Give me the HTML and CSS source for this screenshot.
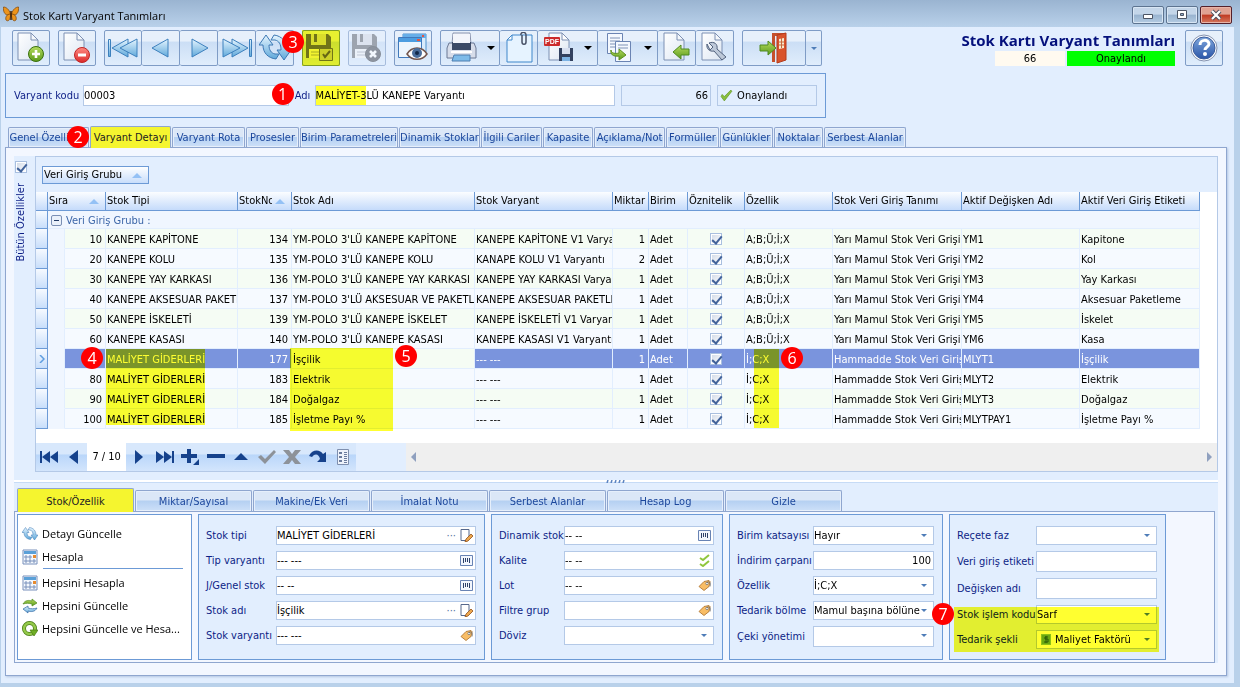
FILE: index.html
```html
<!DOCTYPE html>
<html lang="tr">
<head>
<meta charset="utf-8">
<title>Stok Kartı Varyant Tanımları</title>
<link rel="stylesheet" href="styles.css">
</head>
<body>
<svg class="defs" aria-hidden="true">
  <defs>
    <linearGradient id="gBlue" x1="0" y1="0" x2="0" y2="1"><stop offset="0" stop-color="#e6f5ff"/><stop offset="1" stop-color="#5fa8da"/></linearGradient>
    <linearGradient id="gPage" x1="0" y1="0" x2="1" y2="1"><stop offset="0" stop-color="#ffffff"/><stop offset="1" stop-color="#dde6f2"/></linearGradient>
    <linearGradient id="gGreen" x1="0" y1="0" x2="0" y2="1"><stop offset="0" stop-color="#b6dc5e"/><stop offset="1" stop-color="#5b9a1c"/></linearGradient>
    <linearGradient id="gRed" x1="0" y1="0" x2="0" y2="1"><stop offset="0" stop-color="#ff8a82"/><stop offset="1" stop-color="#dc2a2a"/></linearGradient>
    <linearGradient id="gHelp" x1="0" y1="0" x2="0" y2="1"><stop offset="0" stop-color="#7ea6dc"/><stop offset="1" stop-color="#2a55a8"/></linearGradient>
    <symbol id="page" viewBox="0 0 32 32"><path d="M3 1h13l7 7v20H3z" fill="url(#gPage)" stroke="#7d90b3"/><path d="M16 1v7h7z" fill="#f4f7fb" stroke="#7d90b3"/></symbol>
    <symbol id="cycle" viewBox="0 0 32 32"><g fill="url(#gBlue)" stroke="#3d78b4" stroke-linejoin="round"><path d="M7 3 0 13h4c0 8 5 13 13 14l3-5h-4c-4-1-6-4-6-9h4z"/><path d="m25 28 7-10h-4C28 10 23 4 15 3l-3 5h4c4 1 6 4 6 10h-4z"/></g></symbol>
    <symbol id="floppy" viewBox="0 0 32 32"><path d="M1 2h22l3 3v21H1z" fill="#70747c"/><path d="M6 2h15v11H6z" fill="#d9dde6"/><path d="M9 2h3v8H9z" fill="#70747c"/><path d="M4 17h18v9H4z" fill="#f1f3f7"/><path d="M6 20h13M6 23h13" stroke="#a9aeb8"/></symbol>
    <symbol id="caret" viewBox="0 0 8 4"><path d="M0 0h8L4 4z" fill="currentColor"/></symbol>
    <symbol id="sort" viewBox="0 0 10 5"><path d="M0 5 5 0l5 5z" fill="#94c1f5"/></symbol>
    <symbol id="calc" viewBox="0 0 16 16"><path d="M1 1h14v14H1z" fill="#f4f8fd" stroke="#7890bb"/><path d="M2 2h12v3H2z" fill="#5aa0d8"/><path d="M3 7h2v2H3zM7 7h2v2H7zM3 11h2v2H3zM7 11h2v2H7zM11 11h2v2h-2z" fill="none" stroke="#7890bb"/><path d="M11 6h3v3h-3z" fill="#e78a2e"/></symbol>
    <symbol id="edit" viewBox="0 0 13 13"><path d="M1 .5h8v8l-3 3H1z" fill="#fff" stroke="#56688c"/><path d="m6 10 5-5 2 2-5 5-3 1z" fill="#eda74d" stroke="#91501c" stroke-width=".8"/></symbol>
    <symbol id="bars" viewBox="0 0 13 11"><path d="M.5.5h12v10H.5z" fill="#f2f6fd" stroke="#6883b4"/><path d="M3.500 3v5M5.500 3v4M7.500 3v4M9.500 3v5" stroke="#2c4068"/></symbol>
    <symbol id="tag" viewBox="0 0 13 12"><path d="m1 7 5-5 5-1 1 1-1 5-5 4z" fill="#f8bd66" stroke="#a86d2a" stroke-width=".8"/><circle cx="9" cy="4" r="1.200" fill="#fff" stroke="#666" stroke-width=".7"/><path d="M9 3c3-2 4 1 3 4" fill="none" stroke="#666" stroke-width=".8"/></symbol>
  </defs>
</svg>
<div class="window">
  <header class="titlebar">
    <svg class="app-icon" viewBox="0 0 16 16"><g fill="#ec941c" stroke="#7a3f05" stroke-width=".7"><path d="M7.500 8C6 3 3 1 .5 1 0 5 1.500 9 5 9z"/><path d="M8.500 8c1.500-5 4.500-7 7-7 .5 4-1 8-4.500 8z"/><path d="M7.500 8C4 8 2 11 3 14c2 2 4 0 4.500-4z"/><path d="M8.500 8c3.500 0 5.500 3 4.500 6-2 2-4 0-4.500-4z"/></g><path d="M8 5v9" stroke="#412003" stroke-width="1.500"/></svg>
    <h1 class="titlebar-text">Stok Kartı Varyant Tanımları</h1>
    <div class="caption-buttons">
      <button class="cap" aria-label="Küçült"><svg viewBox="0 0 30 16"><path d="M10.500 7.500h9v4h-9z" fill="#fff" stroke="#4c5564"/></svg></button>
      <button class="cap" aria-label="Büyüt"><svg viewBox="0 0 30 16"><path d="M10.500 3.500h9v8h-9z" fill="#fff" stroke="#4c5564"/><path d="M13.500 6.500h3v2h-3z" fill="#8fabc8" stroke="#4c5564"/></svg></button>
      <button class="cap cap-close" aria-label="Kapat"><svg viewBox="0 0 30 16"><path d="m11 4 8 8m0-8-8 8" stroke="#4b4f5c" stroke-width="4"/><path d="m11 4 8 8m0-8-8 8" stroke="#fff" stroke-width="2.200"/></svg></button>
    </div>
  </header>

  <main class="client">
    <div class="toolbar">
      <button class="tool" aria-label="Yeni"><svg viewBox="0 0 32 32"><use href="#page" width="32" height="32"/><circle cx="21" cy="22" r="7.500" fill="url(#gGreen)" stroke="#39700e"/><path d="M21 18v8M17 22h8" stroke="#fff" stroke-width="2.600"/></svg></button>
      <button class="tool" aria-label="Sil"><svg viewBox="0 0 32 32"><use href="#page" width="32" height="32"/><circle cx="21" cy="23" r="7.500" fill="url(#gRed)" stroke="#c02626"/><path d="M17 23h8" stroke="#fff" stroke-width="3"/></svg></button>
      <div class="tool-group">
        <button class="tool" aria-label="İlk"><svg viewBox="0 0 32 32"><g fill="url(#gBlue)" stroke="#3d80bd"><path d="M1.500 7.500h2v17h-2zM21 7v18L5 16z"/><path d="M30 7v18L13 16z"/></g></svg></button>
        <button class="tool" aria-label="Önceki"><svg viewBox="0 0 32 32"><path d="M23 7v18L7 16z" fill="url(#gBlue)" stroke="#3d80bd"/></svg></button>
        <button class="tool" aria-label="Sonraki"><svg viewBox="0 0 32 32"><path d="M9 7v18l16-9z" fill="url(#gBlue)" stroke="#3d80bd"/></svg></button>
        <button class="tool" aria-label="Son"><svg viewBox="0 0 32 32"><g fill="url(#gBlue)" stroke="#3d80bd"><path d="M28.500 7.500h2v17h-2zM11 7v18l16-9z"/><path d="M2 7v18l17-9z"/></g></svg></button>
        <button class="tool" aria-label="Yenile"><svg viewBox="0 0 32 32"><use href="#cycle" width="32" height="32"/></svg><span class="callout callout-3">3</span></button>
      </div>
      <button class="tool marked" aria-label="Kaydet"><svg viewBox="0 0 32 32"><use href="#floppy" width="32" height="32"/><path d="M14.500 16.500h13v12h-13z" fill="#ccd0d6" stroke="#70747c"/><path d="m18 22 2 3 5-6" fill="none" stroke="#666" stroke-width="2"/></svg></button>
      <button class="tool faded" aria-label="İptal"><svg viewBox="0 0 32 32"><use href="#floppy" width="32" height="32"/><circle cx="22" cy="22" r="7.500" fill="#565a62" stroke="#4c5058"/><path d="m19 19 6 6m0-6-6 6" stroke="#fff" stroke-width="2.600"/></svg></button>
      <button class="tool" aria-label="Önizleme"><svg viewBox="0 0 32 32"><path d="M6 2h23v18H6z" fill="#d8ebfc" stroke="#4d90cc"/><path d="M6 2h23v4H6z" fill="#67aee8"/><path d="M1.500 5.500h23v20h-23z" fill="#edf5fd" stroke="#4079bc"/><path d="M2 6h22v4H2z" fill="#4d9de0"/><path d="M20 7h3v2h-3zM25 3h2v2h-2z" fill="#e55442"/><path d="M10 22c5-8 15-8 20 0-5 7-15 7-20 0z" fill="#fff" stroke="#72554d" stroke-width="1.500"/><circle cx="20" cy="21" r="5" fill="#496d9c"/><circle cx="20" cy="21" r="2" fill="#11284a"/></svg></button>
      <div class="tool-group">
        <button class="tool tool-wide" aria-label="Yazdır"><svg viewBox="0 0 32 32"><path d="M7 1h17l1 11H6z" fill="#eef2fa" stroke="#8993ad"/><path d="M3 11h25l2 5v10H1V16z" fill="#d7ddea" stroke="#6b7894"/><path d="M6 10h19v8H6z" fill="#3b4a66"/><path d="M7 2h17v9H7z" fill="#f3f5fb"/><path d="M5 20h21" stroke="#fff" stroke-width="2"/><path d="M8 23h16v6H6z" fill="#7ebbe9" stroke="#4f7fb0"/></svg><svg class="drop" viewBox="0 0 8 4"><use href="#caret"/></svg></button>
        <button class="tool" aria-label="Ekler"><svg viewBox="0 0 32 32"><path d="M9 3h20v27H4V8z" fill="#e6f3ff" stroke="#3f87cb"/><path d="M9 3v5H4z" fill="#fff" stroke="#3f87cb"/><path d="M19 3v7c0 3 4 3 4 0V3c0-4-6-3-5 0" fill="none" stroke="#475066" stroke-width="1.500"/></svg></button>
        <button class="tool tool-wide" aria-label="PDF kaydet"><svg viewBox="0 0 32 32"><path d="M6 1h13l7 7v20H6z" fill="url(#gPage)" stroke="#7d90b3"/><path d="M19 1v7h7z" fill="#fff" stroke="#7d90b3"/><rect x="1" y="5" width="16" height="9" rx="1" fill="#cc2b2b"/><text x="2" y="12" class="pdf-text">PDF</text><path d="M16 16h14v13H16z" fill="#33415f"/><path d="M19 16h8v6h-8z" fill="#d7dff0"/><path d="M19 25h8v4h-8z" fill="#7db3e4"/></svg><svg class="drop" viewBox="0 0 8 4"><use href="#caret"/></svg></button>
        <button class="tool tool-wide" aria-label="Kopyala"><svg viewBox="0 0 32 32"><path d="M4.500 1.500h15v20h-15z" fill="#f4f8fe" stroke="#6b84b3"/><path d="M7 6h10M7 9h10M7 12h7M7 15h7" stroke="#7f92b6"/><path d="M12.500 9.500h15v20h-15z" fill="#f4f8fe" stroke="#6b84b3"/><path d="M15 13h10M15 16h10" stroke="#7f92b6"/><path d="M8 18c0 3 4 4 8 3v-4l7 6-7 5v-4c-6 1-9-2-8-6z" fill="url(#gGreen)" stroke="#5d901f"/></svg><svg class="drop" viewBox="0 0 8 4"><use href="#caret"/></svg></button>
        <button class="tool" aria-label="İçe aktar"><svg viewBox="0 0 32 32"><use href="#page" width="32" height="32"/><path d="m12 20 8-7v4h8v6h-8v4z" fill="url(#gGreen)" stroke="#4f8a20"/></svg></button>
        <button class="tool" aria-label="Ayarlar"><svg viewBox="0 0 32 32"><use href="#page" width="32" height="32"/><path d="M8 12c-1 5 3 8 7 7l8 9 4-3-9-8c1-5-3-8-8-6l4 4-3 3z" fill="#bdc8d8" stroke="#51617c"/></svg></button>
      </div>
      <div class="tool-group">
        <button class="tool tool-exit" aria-label="Çıkış"><svg viewBox="0 0 32 32"><path d="M14 1h14v3H17v26h-3z" fill="#c5502c"/><path d="m19 3 9-2v27l-9 3z" fill="#d9532c" stroke="#b43c1d"/><path d="m21 7 5-1v10l-5 1z" fill="#f7ead0"/><path d="M23.500 6v10M21 10h5M21 13h5" stroke="#c9683d"/><path d="M2 13h8V9l8 7-8 7v-4H2z" fill="url(#gGreen)" stroke="#4f8a20"/></svg></button>
        <button class="tool tool-thin" aria-label="Çıkış seçenekleri"><svg class="drop drop-blue" viewBox="0 0 8 4"><use href="#caret"/></svg></button>
      </div>
      <div class="status">
        <h2 class="status-title">Stok Kartı Varyant Tanımları</h2>
        <div class="status-row"><span class="status-no">66</span><span class="status-ok">Onaylandı</span></div>
      </div>
      <button class="tool" aria-label="Yardım"><svg viewBox="0 0 32 32"><circle cx="16" cy="16" r="13" fill="#fff" stroke="#8593b0"/><circle cx="16" cy="16" r="11" fill="url(#gHelp)" stroke="#3b5c9c"/><path d="M12 13c0-6 9-6 9-1 0 3-4 3-4 6" fill="none" stroke="#fff" stroke-width="3"/><circle cx="17" cy="22" r="2" fill="#fff"/></svg></button>
    </div>

    <form class="record">
      <label class="lbl" for="kod">Varyant kodu</label>
      <span class="field rec-code"><input id="kod" value="00003"></span>
      <label class="lbl rec-name-lbl" for="adi">Adı<span class="callout callout-1">1</span></label>
      <span class="field rec-name"><input id="adi" value="MALİYET-3LÜ KANEPE Varyantı"><i class="marker marker-name"></i></span>
      <span class="field readonly rec-no"><input class="num" value="66" readonly aria-label="No"></span>
      <span class="field readonly rec-state"><svg class="ic" viewBox="0 0 12 12"><path d="m1 7 3 4 7-9-1-1-6 6-2-2z" fill="#8abf3f" stroke="#5f9420" stroke-width=".6"/></svg><input value="Onaylandı" readonly aria-label="Durum"></span>
    </form>

    <nav class="tabs main-tabs">
      <button class="tab">Genel Özellikler<span class="callout callout-2">2</span></button><button class="tab active">Varyant Detayı</button><button class="tab">Varyant Rota</button><button class="tab">Prosesler</button><button class="tab">Birim Parametreleri</button><button class="tab">Dinamik Stoklar</button><button class="tab">İlgili Cariler</button><button class="tab">Kapasite</button><button class="tab">Açıklama/Not</button><button class="tab">Formüller</button><button class="tab">Günlükler</button><button class="tab">Noktalar</button><button class="tab">Serbest Alanlar</button>
    </nav>

    <section class="sheet">
      <div class="upper">
        <div class="side"><input type="checkbox" class="check" id="all" checked><label for="all" class="side-label">Bütün Özellikler</label></div>
        <div class="grid-box">
          <div class="group-area"><button class="group-chip">Veri Giriş Grubu<svg class="sort" viewBox="0 0 10 5"><use href="#sort"/></svg></button></div>
          <div class="grid-scroll">
            <table class="grid">
              <colgroup><col class="c-ind"><col class="c-gap"><col class="c-sira"><col class="c-tip"><col class="c-no"><col class="c-adi"><col class="c-var"><col class="c-mik"><col class="c-bir"><col class="c-ozn"><col class="c-oz"><col class="c-tan"><col class="c-deg"><col class="c-eti"></colgroup>
              <thead><tr><th></th><th colspan="2"><span class="th-in">Sıra<svg class="sort" viewBox="0 0 10 5"><use href="#sort"/></svg></span></th><th>Stok Tipi</th><th><span class="th-in"><span class="cut">StokNo</span><svg class="sort" viewBox="0 0 10 5"><use href="#sort"/></svg></span></th><th>Stok Adı</th><th>Stok Varyant</th><th>Miktar</th><th>Birim</th><th>Öznitelik</th><th>Özellik</th><th>Stok Veri Giriş Tanımı</th><th>Aktif Değişken Adı</th><th>Aktif Veri Giriş Etiketi</th></tr></thead>
              <tbody>
                <tr class="group-row"><td class="ind"></td><td colspan="13"><button class="collapse" aria-label="Daralt"></button>Veri Giriş Grubu :</td></tr>
                <tr class="alt"><td class="ind"></td><td class="gap"></td><td class="num">10</td><td>KANEPE KAPİTONE</td><td class="num">134</td><td>YM-POLO 3'LÜ KANEPE KAPİTONE</td><td>KANEPE KAPİTONE V1 Varyantı</td><td class="num">1</td><td>Adet</td><td class="mid"><input type="checkbox" class="check" checked aria-label="Öznitelik 10"></td><td>A;B;Ü;İ;X</td><td>Yarı Mamul Stok Veri Grişi</td><td>YM1</td><td>Kapitone</td></tr>
                <tr><td class="ind"></td><td class="gap"></td><td class="num">20</td><td>KANEPE KOLU</td><td class="num">135</td><td>YM-POLO 3'LÜ KANEPE KOLU</td><td>KANAPE KOLU V1 Varyantı</td><td class="num">2</td><td>Adet</td><td class="mid"><input type="checkbox" class="check" checked aria-label="Öznitelik 20"></td><td>A;B;Ü;İ;X</td><td>Yarı Mamul Stok Veri Grişi</td><td>YM2</td><td>Kol</td></tr>
                <tr class="alt"><td class="ind"></td><td class="gap"></td><td class="num">30</td><td>KANEPE YAY KARKASI</td><td class="num">136</td><td>YM-POLO 3'LÜ KANEPE YAY KARKASI</td><td>KANEPE YAY KARKASI Varyantı</td><td class="num">1</td><td>Adet</td><td class="mid"><input type="checkbox" class="check" checked aria-label="Öznitelik 30"></td><td>A;B;Ü;İ;X</td><td>Yarı Mamul Stok Veri Grişi</td><td>YM3</td><td>Yay Karkası</td></tr>
                <tr><td class="ind"></td><td class="gap"></td><td class="num">40</td><td>KANEPE AKSESUAR PAKETLEME</td><td class="num">137</td><td>YM-POLO 3'LÜ AKSESUAR VE PAKETLEME</td><td>KANEPE AKSESUAR PAKETLEME</td><td class="num">1</td><td>Adet</td><td class="mid"><input type="checkbox" class="check" checked aria-label="Öznitelik 40"></td><td>A;B;Ü;İ;X</td><td>Yarı Mamul Stok Veri Grişi</td><td>YM4</td><td>Aksesuar Paketleme</td></tr>
                <tr class="alt"><td class="ind"></td><td class="gap"></td><td class="num">50</td><td>KANEPE İSKELETİ</td><td class="num">139</td><td>YM-POLO 3'LÜ KANEPE İSKELET</td><td>KANEPE İSKELETİ V1 Varyantı</td><td class="num">1</td><td>Adet</td><td class="mid"><input type="checkbox" class="check" checked aria-label="Öznitelik 50"></td><td>A;B;Ü;İ;X</td><td>Yarı Mamul Stok Veri Grişi</td><td>YM5</td><td>İskelet</td></tr>
                <tr><td class="ind"></td><td class="gap"></td><td class="num">60</td><td>KANEPE KASASI</td><td class="num">140</td><td>YM-POLO 3'LÜ KANEPE KASASI</td><td>KANEPE KASASI V1 Varyantı</td><td class="num">1</td><td>Adet</td><td class="mid"><input type="checkbox" class="check" checked aria-label="Öznitelik 60"></td><td>A;B;Ü;İ;X</td><td>Yarı Mamul Stok Veri Grişi</td><td>YM6</td><td>Kasa</td></tr>
                <tr class="selected"><td class="ind"><svg class="row-mark" viewBox="0 0 6 8"><path d="m1 0 4 4-4 4" fill="none" stroke="#5e9de0" stroke-width="1.500"/></svg></td><td class="gap"></td><td class="num"></td><td>MALİYET GİDERLERİ</td><td class="num">177</td><td class="focus">İşçilik</td><td>--- ---</td><td class="num">1</td><td>Adet</td><td class="mid"><input type="checkbox" class="check" checked aria-label="Öznitelik 70"></td><td>İ;C;X</td><td>Hammadde Stok Veri Girişi</td><td>MLYT1</td><td>İşçilik</td></tr>
                <tr><td class="ind"></td><td class="gap"></td><td class="num">80</td><td>MALİYET GİDERLERİ</td><td class="num">183</td><td>Elektrik</td><td>--- ---</td><td class="num">1</td><td>Adet</td><td class="mid"><input type="checkbox" class="check" checked aria-label="Öznitelik 80"></td><td>İ;C;X</td><td>Hammadde Stok Veri Girişi</td><td>MLYT2</td><td>Elektrik</td></tr>
                <tr class="alt"><td class="ind"></td><td class="gap"></td><td class="num">90</td><td>MALİYET GİDERLERİ</td><td class="num">184</td><td>Doğalgaz</td><td>--- ---</td><td class="num">1</td><td>Adet</td><td class="mid"><input type="checkbox" class="check" checked aria-label="Öznitelik 90"></td><td>İ;C;X</td><td>Hammadde Stok Veri Girişi</td><td>MLYT3</td><td>Doğalgaz</td></tr>
                <tr><td class="ind"></td><td class="gap"></td><td class="num">100</td><td>MALİYET GİDERLERİ</td><td class="num">185</td><td>İşletme Payı %</td><td>--- ---</td><td class="num">1</td><td>Adet</td><td class="mid"><input type="checkbox" class="check" checked aria-label="Öznitelik 100"></td><td>İ;C;X</td><td>Hammadde Stok Veri Girişi</td><td>MLYTPAY1</td><td>İşletme Payı %</td></tr>
              </tbody>
            </table>
            <i class="marker marker-tip"></i><i class="marker marker-adi"></i><i class="marker marker-oz"></i>
            <span class="callout callout-4">4</span><span class="callout callout-5">5</span><span class="callout callout-6">6</span>
          </div>
          <div class="grid-foot">
            <div class="navigator">
              <button aria-label="İlk"><svg viewBox="0 0 18 16"><path d="M0 2h2v12H0zM10 2v12L2 8zM18 2v12l-8-6z"/></svg></button>
              <button aria-label="Önceki"><svg viewBox="0 0 18 16"><path d="M13 1v14L4 8z"/></svg></button>
              <span class="nav-pos">7 / 10</span>
              <button aria-label="Sonraki"><svg viewBox="0 0 18 16"><path d="M5 1v14l8-7z"/></svg></button>
              <button aria-label="Son"><svg viewBox="0 0 18 16"><path d="M16 2h2v12h-2zM0 2v12l8-6zM8 2v12l8-6z"/></svg></button>
              <button aria-label="Ekle"><svg viewBox="0 0 18 16"><path d="M6 0h4v5h6v4h-6v5H6V9H0V5h6zM12 16h6v-6z"/></svg></button>
              <button aria-label="Çıkar"><svg viewBox="0 0 18 16"><path d="M0 5h18v4H0z"/></svg></button>
              <button aria-label="Düzenle"><svg viewBox="0 0 18 16"><path d="m2 11 7-7 7 7z"/></svg></button>
              <button class="off" aria-label="Onayla"><svg viewBox="0 0 18 16"><path d="m0 8 3-2 4 4 9-9 2 2L7 15z"/></svg></button>
              <button class="off" aria-label="Vazgeç"><svg viewBox="0 0 18 16"><path d="M0 1h6l3 4 3-4h6l-6 7 6 7h-6l-3-4-3 4H0l6-7z"/></svg></button>
              <button aria-label="Tazele"><svg viewBox="0 0 18 16"><path d="M0 7c3-7 11-7 14-2l3-2v10H8l3-3C10 5 6 4 3 8z"/></svg></button>
              <button aria-label="Form"><svg viewBox="0 0 18 16"><path d="M3.500.5h11v15h-11z" fill="#eef3fb" stroke="#7e8fae"/><path d="M5 3h3v2H5zM5 7h3v2H5zM5 11h3v2H5zM10 3h3v1h-3zM10 5h3v1h-3zM10 7h3v1h-3zM10 9h3v1h-3zM10 11h3v1h-3zM10 13h3v1h-3z" fill="#6b7c9e"/></svg></button>
            </div>
            <div class="hscroll"><svg viewBox="0 0 5 10"><path d="M5 0v10L0 5z"/></svg><svg viewBox="0 0 5 10"><path d="M0 0v10l5-5z"/></svg></div>
          </div>
        </div>
      </div>

      <div class="splitter"><svg viewBox="0 0 20 3"><path d="M1 3 2 0M5 3l1-3M9 3l1-3M13 3l1-3M17 3l1-3" stroke="#5b83c0" stroke-width="1.500"/></svg></div>

      <div class="lower">
        <nav class="tabs sub-tabs">
          <button class="tab active">Stok/Özellik</button><button class="tab">Miktar/Sayısal</button><button class="tab">Makine/Ek Veri</button><button class="tab">İmalat Notu</button><button class="tab">Serbest Alanlar</button><button class="tab">Hesap Log</button><button class="tab">Gizle</button>
        </nav>
        <div class="cards">
          <div class="card actions">
            <button><svg viewBox="0 0 32 32"><use href="#cycle" width="32" height="32"/></svg>Detayı Güncelle</button>
            <button class="ruled"><svg viewBox="0 0 16 16"><use href="#calc"/></svg>Hesapla</button>
            <button><svg viewBox="0 0 16 16"><use href="#calc"/></svg>Hepsini Hesapla</button>
            <button><svg viewBox="0 0 16 16"><path d="M1 6c2-4 6-4 9-3V1l5 4-5 3V6C7 5 4 5 1 6z" fill="url(#gGreen)" stroke="#4f8a20" stroke-width=".7"/><path d="M15 10c-2 4-6 4-9 3v2l-5-4 5-3v2c3 1 6 1 9 0z" fill="url(#gBlue)" stroke="#3268a5" stroke-width=".7"/></svg>Hepsini Güncelle</button>
            <button><svg viewBox="0 0 16 16"><circle cx="7.500" cy="7.500" r="5.500" fill="none" stroke="#477a13" stroke-width="4"/><circle cx="7.500" cy="7.500" r="5.500" fill="none" stroke="#94c94a" stroke-width="2.500"/><path d="M8 9h8l-4 6z" fill="#6fae24" stroke="#477a13" stroke-width=".7"/></svg>Hepsini Güncelle ve Hesa...</button>
          </div>
          <form class="card form form-a">
            <label for="a1">Stok tipi</label><span class="field"><input id="a1" value="MALİYET GİDERLERİ"><b class="dots">···</b><svg class="ic" viewBox="0 0 13 13"><use href="#edit"/></svg></span>
            <label for="a2">Tip varyantı</label><span class="field"><input id="a2" value="--- ---"><svg class="ic" viewBox="0 0 13 11"><use href="#bars"/></svg></span>
            <label for="a3">J/Genel stok</label><span class="field"><input id="a3" value="-- --"><svg class="ic" viewBox="0 0 13 11"><use href="#bars"/></svg></span>
            <label for="a4">Stok adı</label><span class="field"><input id="a4" value="İşçilik"><b class="dots">···</b><svg class="ic" viewBox="0 0 13 13"><use href="#edit"/></svg></span>
            <label for="a5">Stok varyantı</label><span class="field"><input id="a5" value="--- ---"><svg class="ic" viewBox="0 0 13 12"><use href="#tag"/></svg></span>
          </form>
          <form class="card form form-b">
            <label for="b1">Dinamik stok</label><span class="field"><input id="b1" value="-- --"><svg class="ic" viewBox="0 0 13 11"><use href="#bars"/></svg></span>
            <label for="b2">Kalite</label><span class="field"><input id="b2" value="-- --"><svg class="ic" viewBox="0 0 13 13"><path d="m2 4 3 2 6-5M2 10l3 2 6-5" fill="none" stroke="#8fc63d" stroke-width="2"/></svg></span>
            <label for="b3">Lot</label><span class="field"><input id="b3" value="-- --"><svg class="ic" viewBox="0 0 13 12"><use href="#tag"/></svg></span>
            <label for="b4">Filtre grup</label><span class="field"><input id="b4"><svg class="ic" viewBox="0 0 13 12"><use href="#tag"/></svg></span>
            <label for="b5">Döviz</label><span class="field"><select id="b5"><option></option></select><svg class="arrow" viewBox="0 0 8 4"><use href="#caret"/></svg></span>
          </form>
          <form class="card form form-c">
            <label for="c1">Birim katsayısı</label><span class="field"><select id="c1"><option>Hayır</option></select><svg class="arrow" viewBox="0 0 8 4"><use href="#caret"/></svg></span>
            <label for="c2">İndirim çarpanı</label><span class="field"><input id="c2" class="num" value="100"></span>
            <label for="c3">Özellik</label><span class="field"><select id="c3"><option>İ;C;X</option></select><svg class="arrow" viewBox="0 0 8 4"><use href="#caret"/></svg></span>
            <label for="c4">Tedarik bölme</label><span class="field"><select id="c4"><option>Mamul başına bölüne</option></select><svg class="arrow" viewBox="0 0 8 4"><use href="#caret"/></svg></span>
            <label for="c5">Çeki yönetimi</label><span class="field tall"><select id="c5"><option></option></select><svg class="arrow" viewBox="0 0 8 4"><use href="#caret"/></svg></span>
          </form>
          <form class="card form form-d">
            <label for="d1">Reçete faz</label><span class="field"><select id="d1"><option></option></select><svg class="arrow" viewBox="0 0 8 4"><use href="#caret"/></svg></span>
            <label for="d2">Veri giriş etiketi</label><span class="field tall"><input id="d2"></span>
            <label for="d3">Değişken adı</label><span class="field tall"><input id="d3"></span>
            <label for="d4">Stok işlem kodu</label><span class="field"><select id="d4"><option>Sarf</option></select><svg class="arrow" viewBox="0 0 8 4"><use href="#caret"/></svg></span>
            <label for="d5">Tedarik şekli</label><span class="field"><svg class="ic money" viewBox="0 0 10 11"><path d="M0 0h10v11H0z" fill="#8cc07a"/><path d="M1 1h8v9H1z" fill="#6aa858"/><path d="M7 3H4v2h3v3H3M5 2v7" fill="none" stroke="#2b5a24"/></svg><select id="d5"><option>Maliyet Faktörü</option></select><svg class="arrow" viewBox="0 0 8 4"><use href="#caret"/></svg></span>
            <i class="marker marker-form"></i><span class="callout callout-7">7</span>
          </form>
        </div>
      </div>
    </section>
  </main>
</div>
</body>
</html>
```
FILE: styles.css
```css
:root {
  --pane: #e2eefe;
  --sheet: #f3f7ff;
  --line: #6c9ad6;
  --soft: #b4c9e7;
  --tabline: #8fa6cf;
  --navy: #0d1e86;
  --ui: "DejaVu Sans Condensed", "DejaVu Sans", sans-serif;
  --title: "Open Sans", "Noto Sans", sans-serif;
}
* { box-sizing: border-box; }
body { margin: 0; font: 11px/14px var(--ui); color: #000; background: #b9d1ea; }
button, input, select { font: inherit; color: inherit; margin: 0; padding: 0; border: 0; background: none; border-radius: 0; }
h1, h2 { margin: 0; }
.defs { display: block; width: 0; height: 0; }

.window { min-height: 100vh; display: flex; flex-direction: column; padding: 0 6px 4px 1px; }
.titlebar { height: 27px; margin: 0 -6px 0 -1px; padding: 0 8px 0 3px; display: flex; align-items: center; gap: 4px; background: linear-gradient(#9ab4d1, #b9d1ea); }
.app-icon { width: 16px; height: 16px; }
.titlebar-text { flex: 1; font: 11px/16px var(--title); padding-top: 4px; }
.caption-buttons { display: flex; gap: 2px; padding-top: 3px; }
.cap { width: 32px; height: 18px; border: 1px solid #5d7490; border-radius: 2px; background: linear-gradient(#c4d6e9 45%, #98b3cf 50%, #b5cce3); box-shadow: inset 0 0 0 1px #d8e6f4; }
.cap svg { display: block; width: 30px; height: 16px; }
.cap-close { border-color: #54202a; background: linear-gradient(#e0a293 45%, #c03a22 50%, #d5785e); box-shadow: inset 0 0 0 1px #e8b4a8; }

.client { flex: 1; display: flex; flex-direction: column; background: var(--pane); padding: 3px 7px 7px 4px; }

.toolbar { display: flex; gap: 8px; padding: 0 4px 0 7px; height: 43px; align-items: flex-start; }
.tool-group { display: flex; }
.tool { position: relative; width: 38px; height: 36px; flex: none; border: 1px solid #7f9cc6; border-radius: 2px; display: flex; align-items: center; justify-content: center; background: linear-gradient(#e7f0fb 30%, #cbdef5 32%, #e0edfc); }
.tool-group .tool + .tool { border-left: 0; }
.tool > svg { width: 32px; height: 32px; flex: none; }
.tool-wide { width: 60px; justify-content: space-around; }
.tool-exit { width: 64px; }
.tool-thin { width: 16px; }
.tool > .drop { width: 8px; height: 4px; }
.tool > .drop-blue { width: 6px; height: 3px; }
.drop-blue, .arrow { color: #4f7db8; }
.faded { opacity: 0.6; }
.marked::after { content: ""; position: absolute; inset: -1px; background: #ffff30; mix-blend-mode: multiply; }
.pdf-text { font: bold 7px "Liberation Sans", sans-serif; fill: #fff; }
.status { flex: 1; display: flex; flex-direction: column; align-items: flex-end; padding-right: 2px; }
.status-title { font: bold 15px/21px var(--title); color: #04107c; white-space: nowrap; }
.status-row { display: flex; gap: 2px; text-align: center; line-height: 15px; }
.status-no { width: 70px; background: #fffaf0; }
.status-ok { width: 108px; background: #0f0; }

.record { width: 821px; height: 45px; border: 1px solid var(--line); padding: 0 8px; display: flex; align-items: center; }
.lbl, .form label { color: var(--navy); white-space: nowrap; }
.field { position: relative; display: flex; align-items: center; gap: 4px; height: 21px; border: 1px solid var(--soft); background: #fff; padding: 0 2px 0 0; min-width: 0; }
.field input, .field select { flex: 1; width: 0; min-width: 0; height: 100%; outline: 0; appearance: none; }
.num { text-align: right; }
.readonly { background: var(--pane); }
.ic { width: 13px; height: 13px; flex: none; }
.record .lbl:first-child { width: 69px; }
.rec-code { width: 206px; }
.rec-name-lbl { position: relative; width: 26px; padding-left: 6px; }
.rec-name { width: 301px; }
.rec-no { width: 90px; margin: 0 6px; }
.rec-state { width: 100px; }
.rec-state .ic { margin-left: 2px; }

.tabs { display: grid; align-items: end; }
.main-tabs { margin: 8px 0 0 3px; height: 21px; grid-template-columns: 82px 82px 74px 54px 99px 82px 62px 51px 72px 54px 54px 50px 83px; }
.tab { position: relative; height: 20px; margin-right: 1px; border: 1px solid var(--tabline); border-bottom: 0; border-radius: 2px 2px 0 0; color: #1c479c; white-space: nowrap; background: linear-gradient(#dbe7f7 45%, #b5d0f2 50%, #cde0f8); box-shadow: inset 0 0 0 1px #e6effb; display: flex; align-items: center; justify-content: center; }
.main-tabs .tab { padding-top: 1px; }
.sub-tabs .tab { padding-top: 2px; }
.tab.active { height: 22px; z-index: 1; margin-bottom: -1px; color: #222; background: #f5f52f; box-shadow: none; }

.sheet { flex: 1; display: flex; flex-direction: column; border: 1px solid var(--tabline); background: var(--sheet); padding: 8px 8px 12px; box-shadow: 1px 1px 2px #b5c6e2; }
.upper { display: flex; background: var(--pane); padding-bottom: 8px; }
.side { width: 21px; flex: none; display: flex; flex-direction: column; align-items: center; padding: 5px 7px 0 0; }
.side .check { flex: none; }
.side-label { writing-mode: vertical-rl; transform: rotate(180deg); color: var(--navy); margin-top: 10px; white-space: nowrap; }
.check { appearance: none; display: block; position: relative; width: 12px; height: 12px; border: 1px solid #a9bfdf; background: linear-gradient(135deg, #cfd8e6, #fff); box-shadow: inset 0 0 0 1px #fff; }
.check:checked::after { content: ""; position: absolute; left: 3px; top: 0; width: 4px; height: 8px; border: solid #41629a; border-width: 0 2px 2px 0; transform: rotate(40deg); }

.grid-box { flex: 1; min-width: 0; display: flex; flex-direction: column; border: 1px solid var(--soft); background: #fff; }
.group-area { background: var(--pane); padding: 9px 6px 8px; }
.group-chip { display: flex; align-items: center; justify-content: space-between; width: 107px; height: 18px; border: 1px solid var(--line); padding: 0 6px 0 1px; background: linear-gradient(#fdfeff, #c9defb); }
.sort { width: 10px; height: 5px; flex: none; }
.grid-scroll { position: relative; padding-bottom: 14px; }
.grid { table-layout: fixed; width: 1164px; border-collapse: separate; border-spacing: 0; }
.c-ind { width: 12px; } .c-gap { width: 17px; } .c-sira { width: 41px; } .c-tip { width: 132px; } .c-no { width: 54px; } .c-adi { width: 183px; } .c-var { width: 138px; } .c-mik { width: 36px; } .c-bir { width: 39px; } .c-ozn { width: 57px; } .c-oz { width: 88px; } .c-tan { width: 129px; } .c-deg { width: 118px; } .c-eti { width: 120px; }
.grid th { height: 19px; padding: 0 0 0 1px; font-weight: normal; text-align: left; white-space: nowrap; overflow: hidden; background: linear-gradient(#fbfdff, #c5dbfb); border: solid var(--line); border-width: 0 1px 1px 0; }
.grid td { height: 20px; padding: 2px 0 0 1px; white-space: nowrap; overflow: hidden; border: solid var(--pane); border-width: 0 1px 1px 0; background: #f6faff; }
.th-in { display: flex; align-items: center; justify-content: space-between; padding-right: 6px; gap: 3px; }
.cut { overflow: hidden; }
.grid .alt td { background: #f5fcf4; }
.grid td.num { padding-right: 3px; }
.grid td.ind { padding: 0 0 0 3px; border-color: var(--line); background: linear-gradient(#f6faff, #c8defb); }
.grid td.gap, .grid .alt td.gap { background: #f0f6ff; border-bottom-color: #f0f6ff; }
.grid td.mid { padding: 0; }
.grid .group-row td { height: 18px; color: #3c66a8; }
.group-row td:last-child { background: #f0f6ff; }
.collapse { display: inline-block; position: relative; vertical-align: middle; width: 11px; height: 11px; margin: 0 4px 0 2px; border: 1px solid #7a8fb5; border-radius: 2px; background: #e9f0fa; }
.collapse::after { content: ""; position: absolute; left: 2px; right: 2px; top: 4px; height: 1px; background: #223a66; }
.mid .check { margin: 0 auto; }
.grid .selected td:not(.ind, .gap, .focus) { background: #7a94dd; color: #fff; }
.grid .selected td.focus { background: #f5fcf4; }
.row-mark { display: block; width: 6px; height: 8px; }

.grid-foot { display: flex; height: 28px; background: var(--pane); }
.navigator { display: flex; align-items: center; width: 320px; flex: none; background: linear-gradient(#d8e8fc 40%, #b9d6fa 42%, #d3e5fc); margin-right: 50px; color: #16428c; }
.navigator button { width: 26px; height: 28px; display: flex; align-items: center; justify-content: center; }
.navigator svg { width: 18px; height: 16px; fill: currentColor; }
.navigator .off { color: #8d9299; }
.nav-pos { width: 40px; height: 28px; line-height: 28px; text-align: center; background: #fff; color: #000; }
.hscroll { flex: 1; display: flex; align-items: center; justify-content: space-between; padding: 0 5px; background: #efefef; }
.hscroll svg { width: 5px; height: 10px; fill: #8fa0bf; }

.splitter { height: 8px; background: linear-gradient(#fff 2px, #c6dbf6 2px, #c6dbf6 3px, var(--pane) 3px); display: flex; justify-content: center; }
.splitter svg { width: 20px; height: 3px; }

.lower { flex: 1; display: flex; flex-direction: column; background: var(--pane); }
.sub-tabs { height: 23px; padding-left: 3px; grid-template-columns: repeat(7, 118px); }
.sub-tabs .tab { height: 21px; }
.sub-tabs .tab.active { height: 24px; }
.cards { flex: 1; display: flex; gap: 6px; padding: 2px; margin-right: 3px; border: 1px solid var(--tabline); background: var(--sheet); }
.card { position: relative; border: 1px solid var(--line); background: var(--pane); }
.actions { width: 175px; background: #fff; display: flex; flex-direction: column; padding: 7px 8px 0 4px; }
.actions button { display: flex; align-items: center; gap: 4px; height: 23px; font: 11px/16px var(--title); white-space: nowrap; text-align: left; }
.actions svg { width: 16px; height: 16px; flex: none; }
.actions .ruled { position: relative; margin-bottom: 3px; }
.actions .ruled::after { content: ""; position: absolute; left: 21px; right: 0; bottom: -1px; height: 1px; background: var(--line); }
.form { display: grid; gap: 6px 0; align-content: start; align-items: center; padding: 11px 8px 0 7px; }
.form .field { height: 19px; }
.form .field.tall { height: 21px; }
.form-a { width: 287px; grid-template-columns: 70px 1fr; }
.form-b { width: 232px; grid-template-columns: 65px 1fr; }
.form-c { width: 214px; grid-template-columns: 76px 1fr; }
.form-d { width: 217px; grid-template-columns: 79px 1fr; }
.dots { color: #53709f; font-weight: normal; }
.form .field .money { width: 10px; height: 11px; margin: 0 0 0 4px; }
.arrow { position: absolute; right: 6px; top: 7px; width: 6px; height: 3px; pointer-events: none; }

/* Numbered callouts and highlighter marks lie over the interface */
.callout { position: absolute; z-index: 3; width: 22px; height: 22px; border-radius: 50%; background: #f00; color: #fff; font: 16px/22px "Open Sans", sans-serif; text-align: center; }
.callout-1 { left: -17px; top: -6px; }
.callout-2 { right: -1px; top: -2px; }
.callout-3 { right: -11px; top: 0; }
.callout-4 { left: 45px; top: 155px; }
.callout-5 { left: 359px; top: 153px; }
.callout-6 { left: 745px; top: 155px; }
.callout-7 { left: -18px; top: 88px; }
.marker { position: absolute; z-index: 2; background: #ffff30; mix-blend-mode: multiply; pointer-events: none; }
.marker-name { left: 0; top: 0; bottom: 0; width: 50px; }
.marker-tip { left: 70px; top: 157px; width: 99px; height: 76px; }
.marker-adi { left: 254px; top: 156px; width: 103px; height: 83px; }
.marker-oz { left: 718px; top: 157px; width: 25px; height: 79px; }
.marker-form { left: 4px; top: 92px; right: 6px; height: 45px; }
```
